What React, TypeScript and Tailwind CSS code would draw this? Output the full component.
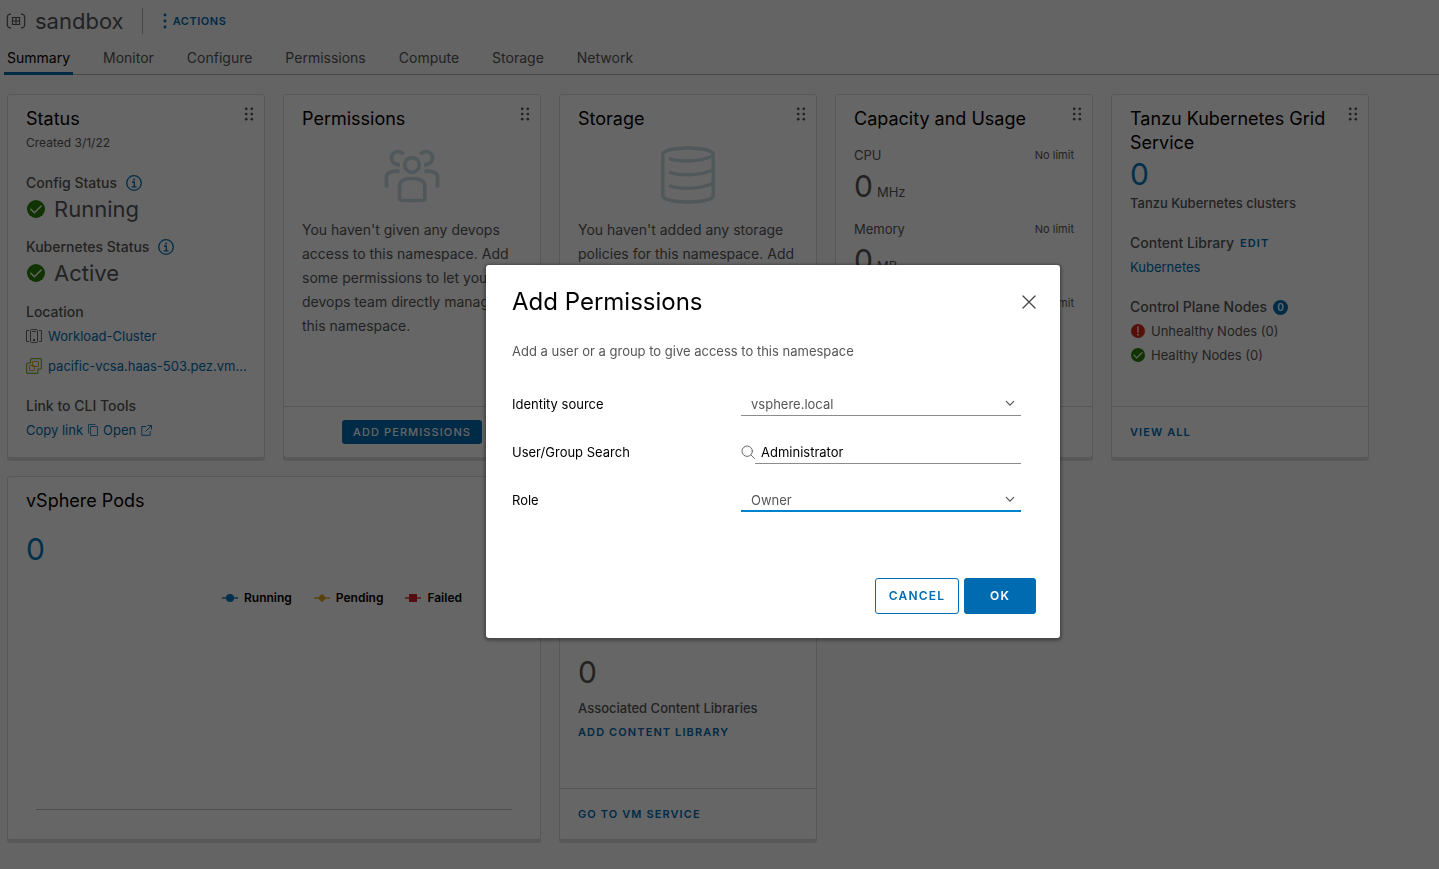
import type { ReactNode } from "react";

const TABS = ["Summary", "Monitor", "Configure", "Permissions", "Compute", "Storage", "Network"];

const CAPACITY = [
  { label: "CPU", unit: "MHz" },
  { label: "Memory", unit: "MB" },
  { label: "Storage", unit: "MB" },
];

function NamespaceIcon() {
  return (
    <svg width="20" height="16" viewBox="0 0 20 16" fill="none" stroke="#565656" strokeWidth="1.2" aria-hidden="true">
      <path d="M5 .8L3.300 1.300Q1.300 2 1.300 4V12Q1.300 14 3.300 14.700L5 15.200M15 .8L16.700 1.300Q18.700 2 18.700 4V12Q18.700 14 16.700 14.700L15 15.200" />
      <path d="M6.500 4.500H13.500V11.500H6.500ZM10 4.500V11.500M6.500 8H13.500" />
    </svg>
  );
}

function DragHandle() {
  return (
    <svg width="10" height="14" viewBox="0 0 10 14" fill="#565656" className="shrink-0" aria-hidden="true">
      <circle cx="2.200" cy="1.800" r="1.350" />
      <circle cx="7.800" cy="1.800" r="1.350" />
      <circle cx="2.200" cy="7" r="1.350" />
      <circle cx="7.800" cy="7" r="1.350" />
      <circle cx="2.200" cy="12.200" r="1.350" />
      <circle cx="7.800" cy="12.200" r="1.350" />
    </svg>
  );
}

function InfoIcon() {
  return (
    <svg width="16" height="16" viewBox="0 0 16 16" fill="none" stroke="#006bb1" aria-hidden="true">
      <circle cx="8" cy="8" r="7.300" strokeWidth="1.300" />
      <path d="M6 7H8.300V11.600M5.700 11.800H10.500" strokeWidth="1.300" />
      <circle cx="8" cy="4.400" r="1" fill="#006bb1" stroke="none" />
    </svg>
  );
}

function CheckIcon({ size }: { size: number }) {
  return (
    <svg width={size} height={size} viewBox="0 0 18 18" className="shrink-0" aria-hidden="true">
      <circle cx="9" cy="9" r="9" fill="#2a8000" />
      <path d="M3.800 9.200L7.400 12.800L14.200 6" fill="none" stroke="#fff" strokeWidth="1.500" strokeLinecap="round" />
    </svg>
  );
}

function ErrorIcon() {
  return (
    <svg width="14" height="14" viewBox="0 0 14 14" className="shrink-0" aria-hidden="true">
      <circle cx="7" cy="7" r="7" fill="#d82a1a" />
      <path d="M7 2.800V8.300" stroke="#fff" strokeWidth="1.300" strokeLinecap="round" />
      <circle cx="7" cy="10.700" r=".9" fill="#fff" />
    </svg>
  );
}

function ClusterIcon() {
  return (
    <svg width="16" height="14" viewBox="0 0 16 14" fill="none" stroke="#666" className="shrink-0" aria-hidden="true">
      <path d="M3 1.500H.5V12.500H3M13 1.500H15.500V12.500H13" />
      <rect x="4.500" y=".5" width="7" height="13" rx="1" />
      <path d="M6 2.500H10" />
      <rect x="7" y="10" width="2" height="2" fill="#555" stroke="none" />
    </svg>
  );
}

function VcenterIcon() {
  return (
    <svg width="16" height="16" viewBox="0 0 16 16" fill="none" className="shrink-0" aria-hidden="true">
      <path d="M5.500 .6H14.400Q15.400 .6 15.400 1.600V10Q15.400 11 14.400 11H12V14.400Q12 15.400 11 15.400H1.600Q.6 15.400 .6 14.400V6Q.6 5 1.600 5H4.500V1.600Q4.500 .6 5.500 .6Z" stroke="#7ab536" strokeWidth="1.200" />
      <rect x="6.500" y="3.500" width="6" height="5" rx=".5" stroke="#d9a42b" />
      <rect x="3.500" y="7.500" width="5" height="5" rx=".5" stroke="#d9a42b" />
    </svg>
  );
}

function CopyIcon() {
  return (
    <svg width="10" height="12" viewBox="0 0 10 12" fill="none" stroke="#006bb1" strokeWidth=".8" aria-hidden="true">
      <path d="M.5 9.500V.5H7.500" />
      <rect x="2.500" y="2.500" width="7" height="9" rx=".4" />
    </svg>
  );
}

function OpenIcon() {
  return (
    <svg width="11" height="11" viewBox="0 0 11 11" fill="none" stroke="#006bb1" strokeWidth=".9" aria-hidden="true">
      <path d="M5 1.500H.8V10.300H9.200V6M6.500 .5H10.500V4.500M10.300 .7L4.500 6.500" />
    </svg>
  );
}

function PeopleIcon() {
  return (
    <svg width="56" height="54" viewBox="0 0 56 54" fill="none" stroke="#c8dce6" strokeWidth="3.700" aria-hidden="true">
      <circle cx="28" cy="16" r="7.300" />
      <path d="M15.600 40.500V37Q15.600 29.500 28 29.500T40.800 37V49Q40.800 51.500 38.500 51.500H18Q15.600 51.500 15.600 49V40" />
      <path d="M15.800 15.800C10.500 16 7.400 12.800 7.400 9C7.400 5 10.500 2.600 14 2.600Q17.500 2.600 19.200 5.200" />
      <path d="M40.200 15.800C45.500 16 48.600 12.800 48.600 9C48.600 5 45.500 2.600 42 2.600Q38.500 2.600 36.800 5.200" />
      <path d="M2.500 38.500V26.500Q4.500 21.800 15.500 22.200" />
      <path d="M53.500 38.500V26.500Q51.500 21.800 40.500 22.200" />
    </svg>
  );
}

function DatabaseIcon() {
  return (
    <svg width="56" height="58" viewBox="0 0 56 58" fill="none" stroke="#c8dce6" strokeWidth="3.400" aria-hidden="true">
      <path d="M2.800 8.500C2.800 4.500 14 2 28 2S53.200 4.500 53.200 8.500V49.500C53.200 53.500 42 56 28 56S2.800 53.500 2.800 49.500Z" />
      <path d="M9 12.500Q15 15 28 15T53 10M9 26Q15 28.800 28 28.800T53 24M9 39.500Q15 42.300 28 42.300T53 37.500" />
    </svg>
  );
}

function Chevron() {
  return (
    <svg width="10" height="7" viewBox="0 0 10 7" fill="none" stroke="#565656" strokeWidth="1.200" strokeLinecap="round" className="pointer-events-none absolute top-2 right-1.5" aria-hidden="true">
      <path d="M1.300 1.300L5 5.200L8.700 1.300" />
    </svg>
  );
}

function Card({ title, wide, handle = true, footer, children }: { title: string; wide?: boolean; handle?: boolean; footer?: ReactNode; children?: ReactNode }) {
  return (
    <section className={`${wide ? "col-span-2" : ""} flex min-h-[364px] flex-col rounded-[3px] border border-[#dcdcdc] bg-white shadow-[0_3px_0_#dcdcdc]`}>
      <div className="flex flex-1 flex-col px-[18px] pt-3">
        <div className="-mr-2 flex items-start justify-between">
          <h2 className="text-lg leading-6 text-black">{title}</h2>
          {handle && <DragHandle />}
        </div>
        {children}
      </div>
      {footer && <div className="flex h-[51px] items-center border-t border-[#d4d4d4] px-[18px]">{footer}</div>}
    </section>
  );
}

function TextAction({ children }: { children: ReactNode }) {
  return (
    <button type="button" className="text-[11px] leading-6 font-semibold tracking-widest text-[#006bb1] uppercase">
      {children}
    </button>
  );
}

function StatusBlock({ label, value }: { label: string; value: string }) {
  return (
    <div>
      <div className="flex items-center gap-[9px] text-sm leading-6 font-medium">
        {label}
        <button type="button" aria-label={`About ${label}`}>
          <InfoIcon />
        </button>
      </div>
      <div className="flex items-center gap-[9px] pl-px text-[22px] leading-7">
        <CheckIcon size={18} />
        {value}
      </div>
    </div>
  );
}

function LegendItem({ label, color, children }: { label: string; color: string; children: ReactNode }) {
  return (
    <li className="flex items-center gap-1.5">
      <svg width="16" height="10" viewBox="0 0 16 10" fill={color} aria-hidden="true">
        <path d="M0 5H16" stroke={color} strokeWidth="1.800" opacity=".75" />
        {children}
      </svg>
      {label}
    </li>
  );
}

function Dialog() {
  return (
    <div className="fixed inset-0 z-10 flex items-center justify-center bg-black/60 pt-[34px] pl-[107px]">
      <div role="dialog" aria-modal="true" aria-labelledby="dialog-title" className="w-[574px] rounded-[3px] bg-white py-6 pr-6 pl-[26px] shadow-[0_1px_3px_2px_rgba(0,0,0,0.3)]">
        <div className="flex items-center justify-between pt-px">
          <h1 id="dialog-title" className="text-2xl leading-6 text-black">Add Permissions</h1>
          <button type="button" aria-label="Close">
            <svg width="14" height="14" viewBox="0 0 14 14" stroke="#454545" strokeWidth="1.300" strokeLinecap="round" aria-hidden="true">
              <path d="M1 1L13 13M13 1L1 13" />
            </svg>
          </button>
        </div>
        <p className="mt-[25px] text-[13px] leading-6 text-[#565656]">Add a user or a group to give access to this namespace</p>
        <form className="mt-[29px] flex flex-col gap-6 pr-[15px] text-[13px] leading-6">
          <div className="flex justify-between">
            <label htmlFor="source" className="text-black">Identity source</label>
            <div className="relative w-[280px]">
              <select id="source" defaultValue="vsphere.local" className="block h-6 w-full appearance-none border-b border-[#8c8c8c] bg-transparent pl-2.5 text-[#565656] outline-none">
                <option>vsphere.local</option>
              </select>
              <Chevron />
            </div>
          </div>
          <div className="flex justify-between">
            <label htmlFor="search" className="text-black">User/Group Search</label>
            <div className="flex w-[280px] items-center">
              <svg width="14" height="14" viewBox="0 0 14 14" fill="none" stroke="#6a6a6a" strokeLinecap="round" className="shrink-0" aria-hidden="true">
                <circle cx="6.200" cy="6.200" r="5.200" />
                <path d="M10.200 10.200L13.300 13.400" />
              </svg>
              <input id="search" defaultValue="Administrator" className="h-6 min-w-0 flex-1 border-b border-[#8c8c8c] pl-1.5 text-black outline-none" />
            </div>
          </div>
          <div className="flex justify-between">
            <label htmlFor="role" className="text-black">Role</label>
            <div className="relative w-[280px]">
              <select id="role" defaultValue="Owner" className="block h-6 w-full appearance-none border-b-2 border-[#0083ca] bg-transparent pl-2.5 text-[#565656] outline-none">
                <option>Owner</option>
              </select>
              <Chevron />
            </div>
          </div>
        </form>
        <div className="mt-[66px] flex justify-end gap-[5px] text-xs font-semibold tracking-widest">
          <button type="button" className="h-9 w-[84px] rounded-[3px] border border-[#006bb1] text-[#006bb1]">CANCEL</button>
          <button type="button" className="h-9 w-[72px] rounded-[3px] bg-[#006bb1] text-white">OK</button>
        </div>
      </div>
    </div>
  );
}

export default function App() {
  return (
    <div className="min-h-screen bg-[#fafafa] font-['Inter',sans-serif] text-[#565656]">
      <header className="flex h-[42px] items-center pl-1.5">
        <NamespaceIcon />
        <span className="ml-[9px] text-[22px] leading-6">sandbox</span>
        <span className="ml-[18px] h-[26px] w-px bg-[#b3b3b3]" />
        <button type="button" className="ml-5 flex items-center gap-1.5 text-[11px] font-semibold tracking-wider text-[#006bb1]">
          <svg width="4" height="16" viewBox="0 0 4 16" fill="#006bb1" aria-hidden="true">
            <circle cx="2" cy="2" r="1.400" />
            <circle cx="2" cy="8" r="1.400" />
            <circle cx="2" cy="14" r="1.400" />
          </svg>
          ACTIONS
        </button>
      </header>
      <nav className="ml-1 flex h-[33px] gap-[27px] border-b border-[#b3b3b3]">
        {TABS.map((tab, i) => (
          <a key={tab} href="#" aria-current={i === 0 ? "page" : undefined} className={i === 0 ? "-mb-px border-b-3 border-[#006bb1] px-[3px] pt-1 text-sm leading-6 text-black" : "px-[3px] pt-1 text-sm leading-6"}>
            {tab}
          </a>
        ))}
      </nav>

      <main className="grid grid-cols-[repeat(auto-fill,258px)] gap-[18px] px-[7px] pt-[19px] pb-7">
        <Card title="Status">
          <p className="text-xs leading-6">Created 3/1/22</p>
          <div className="mt-4 flex flex-col gap-3">
            <StatusBlock label="Config Status" value="Running" />
            <StatusBlock label="Kubernetes Status" value="Active" />
          </div>
          <h3 className="mt-[13px] text-sm leading-6 font-medium">Location</h3>
          <div className="flex flex-col gap-1.5 text-[13px] leading-6 whitespace-nowrap text-[#006bb1]">
            <a href="#" className="flex items-center gap-1.5">
              <ClusterIcon />
              Workload-Cluster
            </a>
            <a href="#" className="flex items-center gap-1.5">
              <VcenterIcon />
              pacific-vcsa.haas-503.pez.vm...
            </a>
          </div>
          <h3 className="mt-4 text-sm leading-6 font-medium">Link to CLI Tools</h3>
          <div className="flex gap-[5px] text-[13px] leading-6 text-[#006bb1]">
            <button type="button" className="flex items-center gap-[5px]">
              Copy link
              <CopyIcon />
            </button>
            <a href="#" className="flex items-center gap-[5px]">
              Open
              <OpenIcon />
            </a>
          </div>
        </Card>

        <Card
          title="Permissions"
          footer={
            <button type="button" className="mx-auto h-6 rounded-[3px] bg-[#006bb1] px-[11px] text-[11px] font-medium tracking-widest text-white">
              ADD PERMISSIONS
            </button>
          }
        >
          <div className="mt-[18px] flex justify-center">
            <PeopleIcon />
          </div>
          <p className="mt-[15px] text-sm leading-6">
            You haven't given any devops access to this namespace. Add some permissions to let your devops team directly manage this namespace.
          </p>
        </Card>

        <Card title="Storage" footer={<span />}>
          <div className="mt-[15px] flex justify-center">
            <DatabaseIcon />
          </div>
          <p className="mt-[14px] text-sm leading-6">You haven't added any storage policies for this namespace. Add</p>
        </Card>

        <Card title="Capacity and Usage" footer={<span />}>
          <dl className="mt-3 flex flex-col gap-3.5">
            {CAPACITY.map(({ label, unit }) => (
              <div key={label}>
                <dt className="flex items-center justify-between text-[13px] leading-6">
                  {label}
                  <span className="text-[11px]">No limit</span>
                </dt>
                <dd className="flex h-9 items-baseline gap-1 text-[13px]">
                  <span className="text-[30px] leading-[38px]">0</span>
                  {unit}
                </dd>
              </div>
            ))}
          </dl>
        </Card>

        <Card title="Tanzu Kubernetes Grid Service" footer={<TextAction>View all</TextAction>}>
          <p className="text-[30px] leading-[38px] text-[#0079b8]">0</p>
          <p className="text-[13px] leading-5 font-medium">Tanzu Kubernetes clusters</p>
          <h3 className="mt-[18px] flex gap-1.5 text-sm leading-6 font-medium">
            Content Library
            <TextAction>Edit</TextAction>
          </h3>
          <a href="#" className="text-[13px] leading-6 text-[#006bb1]">Kubernetes</a>
          <h3 className="mt-4 flex items-center gap-1.5 text-sm leading-6 font-medium">
            Control Plane Nodes
            <span className="flex size-[15px] items-center justify-center rounded-full bg-[#006bb1] text-[10px] font-semibold text-white">0</span>
          </h3>
          <ul className="pl-px text-[13px] leading-6">
            <li className="flex items-center gap-1.5">
              <ErrorIcon />
              Unhealthy Nodes (0)
            </li>
            <li className="flex items-center gap-1.5">
              <CheckIcon size={14} />
              Healthy Nodes (0)
            </li>
          </ul>
        </Card>

        <Card title="vSphere Pods" wide handle={false}>
          <p className="mt-3 text-[30px] leading-[48px] text-[#0079b8]">0</p>
          <ul className="mt-[13px] flex justify-end gap-[22px] pr-[60px] text-xs leading-6 font-semibold text-black">
            <LegendItem label="Running" color="#0079b8">
              <circle cx="8" cy="5" r="4" />
            </LegendItem>
            <LegendItem label="Pending" color="#d9a520">
              <path d="M8 .8L12.200 5L8 9.200L3.800 5Z" />
            </LegendItem>
            <LegendItem label="Failed" color="#d8232a">
              <path d="M4 1H12V9H4Z" />
            </LegendItem>
          </ul>
          <div className="mx-2.5 mb-[29px] flex-1 border-b border-[#c0c0c0]" />
        </Card>

        <Card title="VM Service" footer={<TextAction>Go to VM Service</TextAction>}>
          <div className="mt-auto flex flex-col items-start pb-11">
            <p className="text-[30px] leading-[48px]">0</p>
            <p className="text-[13px] leading-6 font-medium">Associated Content Libraries</p>
            <TextAction>Add content library</TextAction>
          </div>
        </Card>
      </main>
      <Dialog />
    </div>
  );
}
